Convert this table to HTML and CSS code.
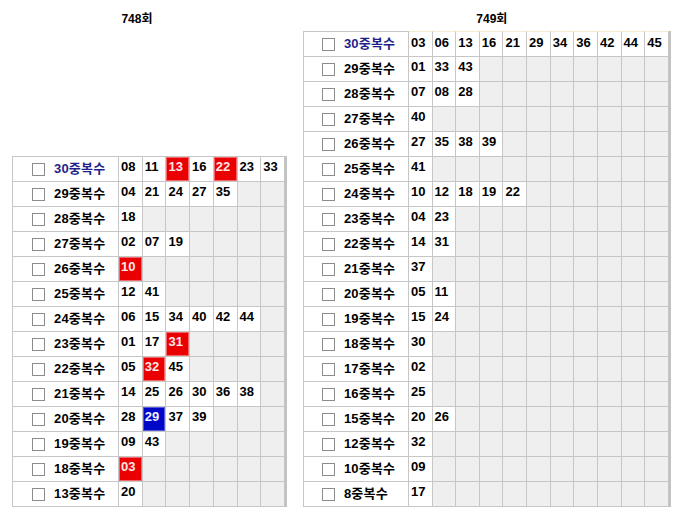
FILE: index.html
```html
<!DOCTYPE html>
<html lang="ko">
<head>
<meta charset="utf-8">
<title>중복수</title>
<link rel="stylesheet" href="styles.css">
</head>
<body>
<div class="board">
  <section class="panel panel-left">
    <div class="title title-left">748회</div>
    <div class="grid grid-left">
      <div class="lbl top"><input type="checkbox" class="chk"><span>30중복수</span></div>
      <span class="c">08</span><span class="c">11</span><span class="c red">13</span><span class="c">16</span><span class="c red">22</span><span class="c">23</span><span class="c">33</span>
      <div class="lbl"><input type="checkbox" class="chk"><span>29중복수</span></div>
      <span class="c">04</span><span class="c">21</span><span class="c">24</span><span class="c">27</span><span class="c">35</span><span class="c e"></span><span class="c e"></span>
      <div class="lbl"><input type="checkbox" class="chk"><span>28중복수</span></div>
      <span class="c">18</span><span class="c e"></span><span class="c e"></span><span class="c e"></span><span class="c e"></span><span class="c e"></span><span class="c e"></span>
      <div class="lbl"><input type="checkbox" class="chk"><span>27중복수</span></div>
      <span class="c">02</span><span class="c">07</span><span class="c">19</span><span class="c e"></span><span class="c e"></span><span class="c e"></span><span class="c e"></span>
      <div class="lbl"><input type="checkbox" class="chk"><span>26중복수</span></div>
      <span class="c red">10</span><span class="c e"></span><span class="c e"></span><span class="c e"></span><span class="c e"></span><span class="c e"></span><span class="c e"></span>
      <div class="lbl"><input type="checkbox" class="chk"><span>25중복수</span></div>
      <span class="c">12</span><span class="c">41</span><span class="c e"></span><span class="c e"></span><span class="c e"></span><span class="c e"></span><span class="c e"></span>
      <div class="lbl"><input type="checkbox" class="chk"><span>24중복수</span></div>
      <span class="c">06</span><span class="c">15</span><span class="c">34</span><span class="c">40</span><span class="c">42</span><span class="c">44</span><span class="c e"></span>
      <div class="lbl"><input type="checkbox" class="chk"><span>23중복수</span></div>
      <span class="c">01</span><span class="c">17</span><span class="c red">31</span><span class="c e"></span><span class="c e"></span><span class="c e"></span><span class="c e"></span>
      <div class="lbl"><input type="checkbox" class="chk"><span>22중복수</span></div>
      <span class="c">05</span><span class="c red">32</span><span class="c">45</span><span class="c e"></span><span class="c e"></span><span class="c e"></span><span class="c e"></span>
      <div class="lbl"><input type="checkbox" class="chk"><span>21중복수</span></div>
      <span class="c">14</span><span class="c">25</span><span class="c">26</span><span class="c">30</span><span class="c">36</span><span class="c">38</span><span class="c e"></span>
      <div class="lbl"><input type="checkbox" class="chk"><span>20중복수</span></div>
      <span class="c">28</span><span class="c blue">29</span><span class="c">37</span><span class="c">39</span><span class="c e"></span><span class="c e"></span><span class="c e"></span>
      <div class="lbl"><input type="checkbox" class="chk"><span>19중복수</span></div>
      <span class="c">09</span><span class="c">43</span><span class="c e"></span><span class="c e"></span><span class="c e"></span><span class="c e"></span><span class="c e"></span>
      <div class="lbl"><input type="checkbox" class="chk"><span>18중복수</span></div>
      <span class="c red">03</span><span class="c e"></span><span class="c e"></span><span class="c e"></span><span class="c e"></span><span class="c e"></span><span class="c e"></span>
      <div class="lbl"><input type="checkbox" class="chk"><span>13중복수</span></div>
      <span class="c">20</span><span class="c e"></span><span class="c e"></span><span class="c e"></span><span class="c e"></span><span class="c e"></span><span class="c e"></span>
    </div>
  </section>

  <section class="panel panel-right">
    <div class="title title-right">749회</div>
    <div class="grid grid-right">
      <div class="lbl top"><input type="checkbox" class="chk"><span>30중복수</span></div>
      <span class="c f">03</span><span class="c f">06</span><span class="c f">13</span><span class="c f">16</span><span class="c f">21</span><span class="c f">29</span><span class="c f">34</span><span class="c f">36</span><span class="c f">42</span><span class="c f">44</span><span class="c f">45</span>
      <div class="lbl"><input type="checkbox" class="chk"><span>29중복수</span></div>
      <span class="c">01</span><span class="c">33</span><span class="c">43</span><span class="c e"></span><span class="c e"></span><span class="c e"></span><span class="c e"></span><span class="c e"></span><span class="c e"></span><span class="c e"></span><span class="c e"></span>
      <div class="lbl"><input type="checkbox" class="chk"><span>28중복수</span></div>
      <span class="c">07</span><span class="c">08</span><span class="c">28</span><span class="c e"></span><span class="c e"></span><span class="c e"></span><span class="c e"></span><span class="c e"></span><span class="c e"></span><span class="c e"></span><span class="c e"></span>
      <div class="lbl"><input type="checkbox" class="chk"><span>27중복수</span></div>
      <span class="c">40</span><span class="c e"></span><span class="c e"></span><span class="c e"></span><span class="c e"></span><span class="c e"></span><span class="c e"></span><span class="c e"></span><span class="c e"></span><span class="c e"></span><span class="c e"></span>
      <div class="lbl"><input type="checkbox" class="chk"><span>26중복수</span></div>
      <span class="c">27</span><span class="c">35</span><span class="c">38</span><span class="c">39</span><span class="c e"></span><span class="c e"></span><span class="c e"></span><span class="c e"></span><span class="c e"></span><span class="c e"></span><span class="c e"></span>
      <div class="lbl"><input type="checkbox" class="chk"><span>25중복수</span></div>
      <span class="c">41</span><span class="c e"></span><span class="c e"></span><span class="c e"></span><span class="c e"></span><span class="c e"></span><span class="c e"></span><span class="c e"></span><span class="c e"></span><span class="c e"></span><span class="c e"></span>
      <div class="lbl"><input type="checkbox" class="chk"><span>24중복수</span></div>
      <span class="c">10</span><span class="c">12</span><span class="c">18</span><span class="c">19</span><span class="c">22</span><span class="c e"></span><span class="c e"></span><span class="c e"></span><span class="c e"></span><span class="c e"></span><span class="c e"></span>
      <div class="lbl"><input type="checkbox" class="chk"><span>23중복수</span></div>
      <span class="c">04</span><span class="c">23</span><span class="c e"></span><span class="c e"></span><span class="c e"></span><span class="c e"></span><span class="c e"></span><span class="c e"></span><span class="c e"></span><span class="c e"></span><span class="c e"></span>
      <div class="lbl"><input type="checkbox" class="chk"><span>22중복수</span></div>
      <span class="c">14</span><span class="c">31</span><span class="c e"></span><span class="c e"></span><span class="c e"></span><span class="c e"></span><span class="c e"></span><span class="c e"></span><span class="c e"></span><span class="c e"></span><span class="c e"></span>
      <div class="lbl"><input type="checkbox" class="chk"><span>21중복수</span></div>
      <span class="c">37</span><span class="c e"></span><span class="c e"></span><span class="c e"></span><span class="c e"></span><span class="c e"></span><span class="c e"></span><span class="c e"></span><span class="c e"></span><span class="c e"></span><span class="c e"></span>
      <div class="lbl"><input type="checkbox" class="chk"><span>20중복수</span></div>
      <span class="c">05</span><span class="c">11</span><span class="c e"></span><span class="c e"></span><span class="c e"></span><span class="c e"></span><span class="c e"></span><span class="c e"></span><span class="c e"></span><span class="c e"></span><span class="c e"></span>
      <div class="lbl"><input type="checkbox" class="chk"><span>19중복수</span></div>
      <span class="c">15</span><span class="c">24</span><span class="c e"></span><span class="c e"></span><span class="c e"></span><span class="c e"></span><span class="c e"></span><span class="c e"></span><span class="c e"></span><span class="c e"></span><span class="c e"></span>
      <div class="lbl"><input type="checkbox" class="chk"><span>18중복수</span></div>
      <span class="c">30</span><span class="c e"></span><span class="c e"></span><span class="c e"></span><span class="c e"></span><span class="c e"></span><span class="c e"></span><span class="c e"></span><span class="c e"></span><span class="c e"></span><span class="c e"></span>
      <div class="lbl"><input type="checkbox" class="chk"><span>17중복수</span></div>
      <span class="c">02</span><span class="c e"></span><span class="c e"></span><span class="c e"></span><span class="c e"></span><span class="c e"></span><span class="c e"></span><span class="c e"></span><span class="c e"></span><span class="c e"></span><span class="c e"></span>
      <div class="lbl"><input type="checkbox" class="chk"><span>16중복수</span></div>
      <span class="c">25</span><span class="c e"></span><span class="c e"></span><span class="c e"></span><span class="c e"></span><span class="c e"></span><span class="c e"></span><span class="c e"></span><span class="c e"></span><span class="c e"></span><span class="c e"></span>
      <div class="lbl"><input type="checkbox" class="chk"><span>15중복수</span></div>
      <span class="c">20</span><span class="c">26</span><span class="c e"></span><span class="c e"></span><span class="c e"></span><span class="c e"></span><span class="c e"></span><span class="c e"></span><span class="c e"></span><span class="c e"></span><span class="c e"></span>
      <div class="lbl"><input type="checkbox" class="chk"><span>12중복수</span></div>
      <span class="c">32</span><span class="c e"></span><span class="c e"></span><span class="c e"></span><span class="c e"></span><span class="c e"></span><span class="c e"></span><span class="c e"></span><span class="c e"></span><span class="c e"></span><span class="c e"></span>
      <div class="lbl"><input type="checkbox" class="chk"><span>10중복수</span></div>
      <span class="c">09</span><span class="c e"></span><span class="c e"></span><span class="c e"></span><span class="c e"></span><span class="c e"></span><span class="c e"></span><span class="c e"></span><span class="c e"></span><span class="c e"></span><span class="c e"></span>
      <div class="lbl"><input type="checkbox" class="chk"><span>8중복수</span></div>
      <span class="c">17</span><span class="c e"></span><span class="c e"></span><span class="c e"></span><span class="c e"></span><span class="c e"></span><span class="c e"></span><span class="c e"></span><span class="c e"></span><span class="c e"></span><span class="c e"></span>
    </div>
  </section>
</div>
</body>
</html>
```

FILE: styles.css
```css
html, body {
  margin: 0;
  padding: 0;
  background: #ffffff;
}

body {
  font-family: "Liberation Sans", "Noto Sans CJK KR", sans-serif;
  color: #000;
}

.board {
  display: flex;
  align-items: stretch;
  gap: 16px;
  padding-left: 12px;
  width: 680px;
  height: 529px;
  box-sizing: border-box;
  padding-bottom: 22px;
}

.panel {
  display: flex;
  flex-direction: column;
}

.title {
  height: 31px;
  box-sizing: border-box;
  padding-top: 11px;
  font-size: 12px;
  font-weight: bold;
  line-height: 16px;
  text-align: center;
}

.title-left {
  padding-right: 25px;
}

.title-right {
  padding-left: 10px;
}

.grid {
  margin-top: auto;
  display: grid;
  grid-auto-rows: 25px;
  border-top: 1px solid #c6c6c6;
  border-left: 1px solid #c6c6c6;
  border-right: 2px solid #c2c2c2;
}

.grid-left {
  grid-template-columns: 106px repeat(7, 23.71px);
}

.grid-right {
  grid-template-columns: 105px repeat(11, 23.64px);
}

.lbl {
  display: flex;
  align-items: center;
  gap: 9px;
  padding-left: 18px;
  box-sizing: border-box;
  border-right: 1px solid #c6c6c6;
  border-bottom: 1px solid #c6c6c6;
  background: #fff;
  font-size: 13px;
  font-weight: bold;
  line-height: 24px;
  letter-spacing: 0.2px;
  white-space: nowrap;
}

.grid-left .lbl {
  padding-left: 19px;
}

.lbl.top span {
  color: #1f1f8a;
}

.chk {
  appearance: none;
  -webkit-appearance: none;
  margin: 0;
  width: 13px;
  height: 13px;
  box-sizing: border-box;
  border: 1px solid #8c8c8c;
  background: #fff;
  flex: none;
}

.c {
  display: block;
  box-sizing: border-box;
  border-right: 1px solid #c6c6c6;
  border-bottom: 1px solid #c6c6c6;
  background: #fff;
  padding-left: 2px;
  font-size: 13px;
  font-weight: bold;
  line-height: 20px;
  white-space: nowrap;
}

.c.e {
  background: #efefef;
}

.c.f {
  border-top: 1px solid #f1ecd2;
  margin-top: -1px;
  height: 26px;
  padding-top: 1px;
}

.c.red {
  background: #ea0000;
  color: #ffe8e8;
  box-shadow: inset 0 0 0 1px #f26a6a;
}

.c.blue {
  background: #0008c8;
  color: #f0f0ff;
  box-shadow: inset 0 0 0 1px #5a5ae0;
}
```
